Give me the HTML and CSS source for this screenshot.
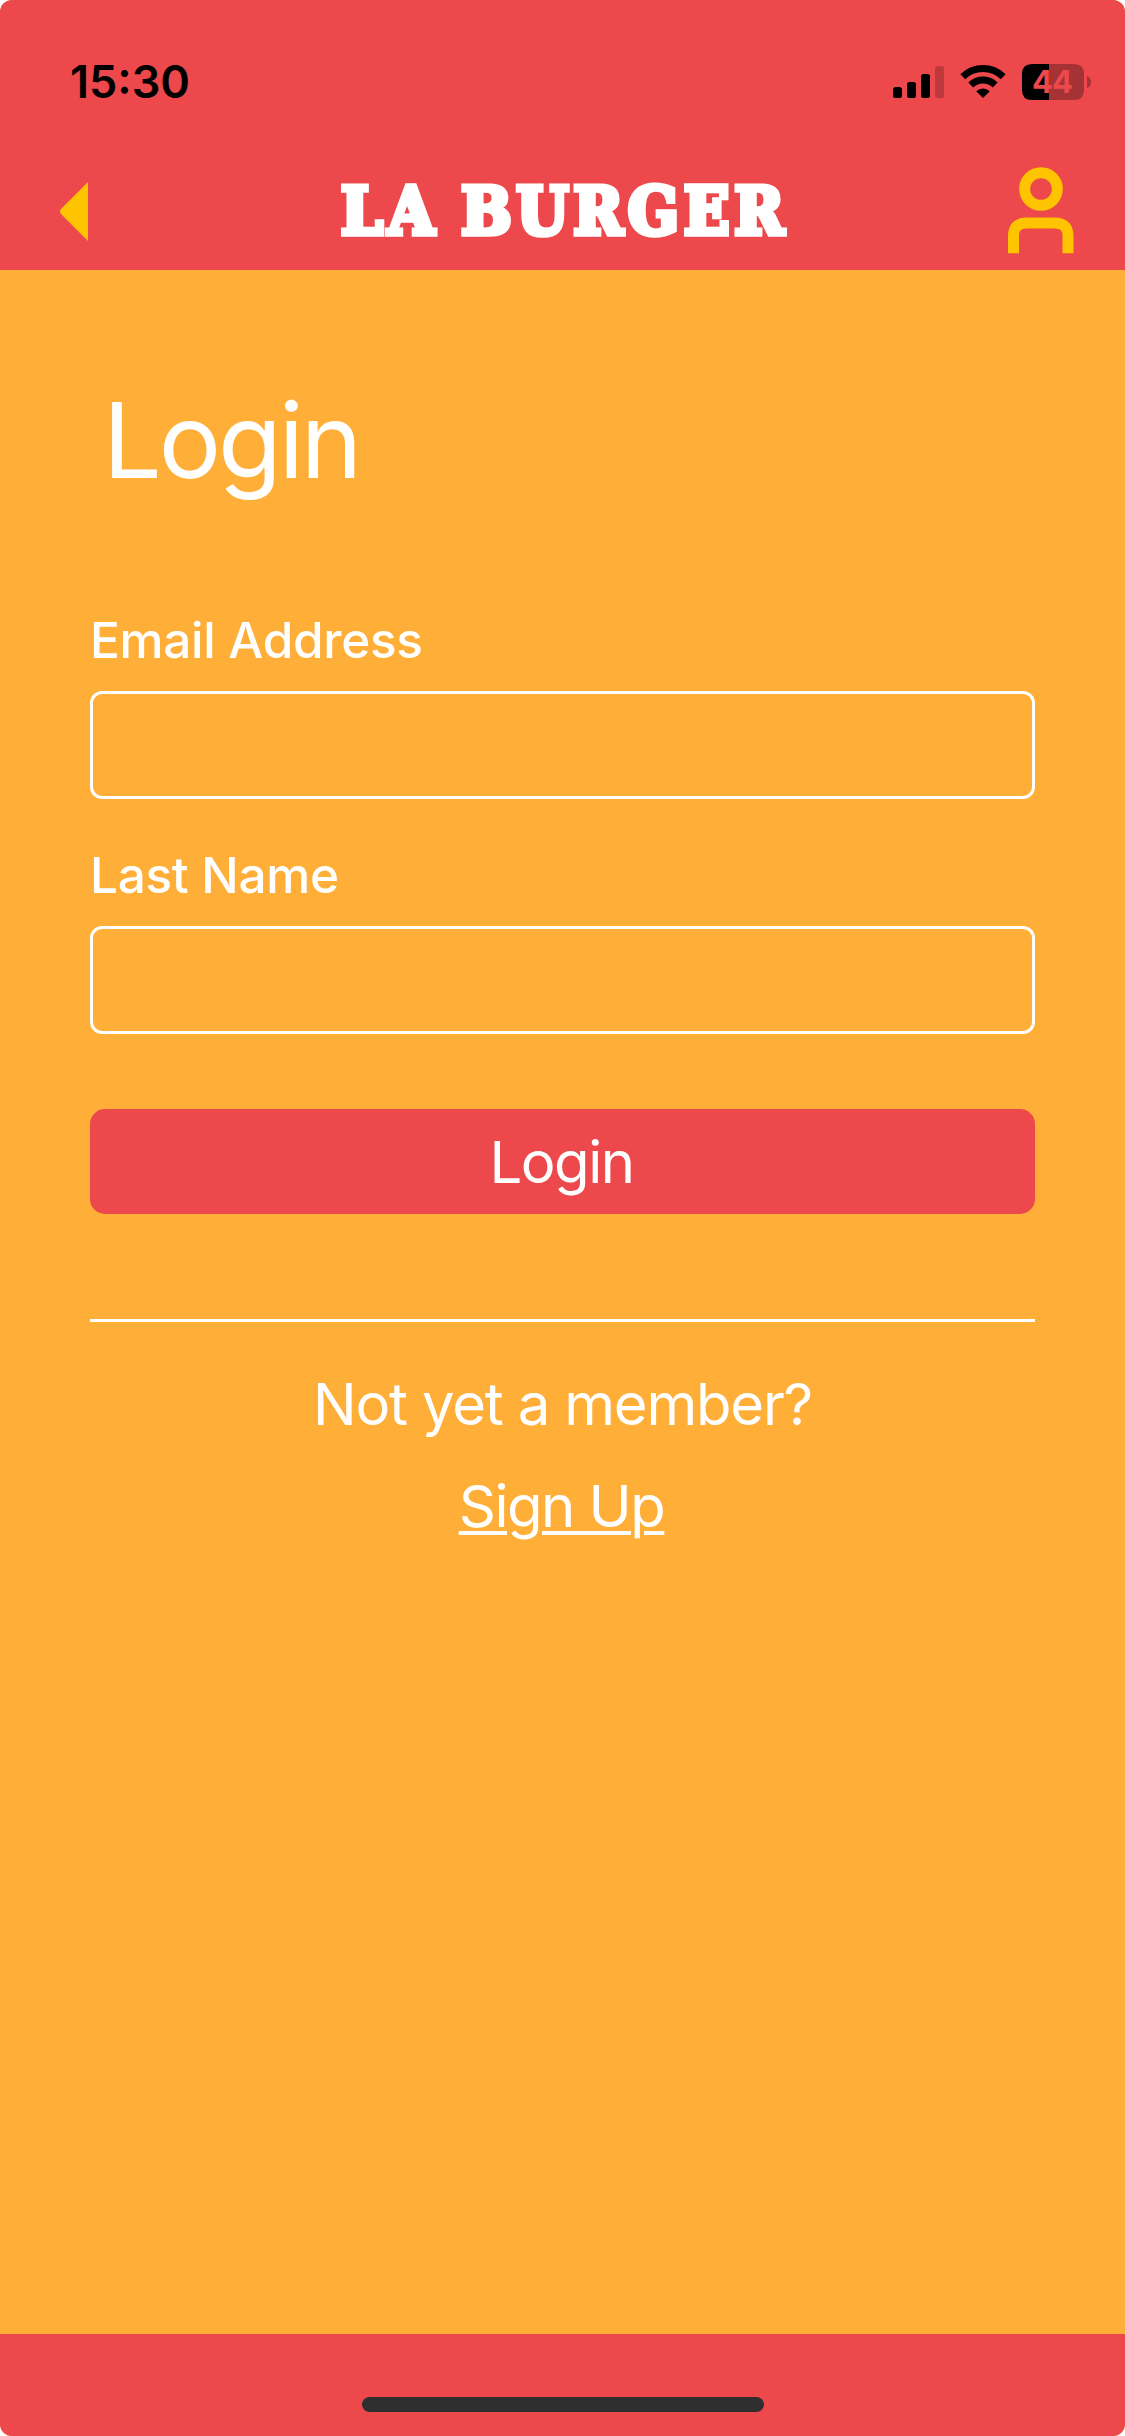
FILE: index.html
```html
<!DOCTYPE html>
<html lang="en">
<head>
<meta charset="utf-8">
<title>La Burger – Login</title>
<link rel="stylesheet" href="styles.css">
</head>
<body>
<div class="screen">
  <header class="header">
    <div class="status">
      <span class="time">15:30</span>
      <svg class="status-icons" width="200" height="38" viewBox="892 64 200 38">
        <rect x="893" y="87" width="9" height="11" rx="2.5"/>
        <rect x="907" y="82" width="9" height="16" rx="2.5"/>
        <rect x="921" y="74" width="9" height="24" rx="2.5"/>
        <rect x="935" y="66" width="9" height="32" rx="2.5" opacity=".2"/>
        <g fill="none" stroke="#000">
          <path d="M962.8 76.8 A29 29 0 0 1 1003.2 76.8" stroke-width="7"/>
          <path d="M970.8 84.9 A17.6 17.6 0 0 1 995.2 84.9" stroke-width="7"/>
        </g>
        <path d="M983 98 L976.2 91.2 A9.8 9.8 0 0 1 989.8 91.2 Z"/>
        <path d="M1049 64 H1074 Q1084 64 1084 74 V90 Q1084 100 1074 100 H1049 Z" opacity=".3"/>
        <path d="M1049 64 H1032 Q1022 64 1022 74 V90 Q1022 100 1032 100 H1049 Z"/>
        <path d="M1087 76 Q1091 77.500 1091 82 Q1091 86.500 1087 88 Z" opacity=".3"/>
        <text class="battery-level" x="1032" y="93" textLength="41">44</text>
      </svg>
    </div>
    <nav class="nav">
      <svg class="back" width="28" height="59" viewBox="0 0 28 59"><path d="M28 0 V59 L1 32 Q-1 29.500 1 27 Z"/></svg>
      <div class="brand">LA BURGER</div>
      <svg class="user" width="66" height="88" viewBox="0 0 66 88">
        <circle cx="33" cy="22" r="16.300"/>
        <path d="M5.500 86.300 V69 Q5.500 56 18.500 56 H47 Q60 56 60 69 V86.300"/>
      </svg>
    </nav>
  </header>
  <main class="main">
    <h1 class="title">Login</h1>
    <form class="form">
      <label class="label" for="email">Email Address</label>
      <input class="field" id="email">
      <label class="label" for="last">Last Name</label>
      <input class="field" id="last">
      <button class="submit" type="button">Login</button>
    </form>
    <hr class="rule">
    <p class="prompt">Not yet a member?</p>
    <p class="prompt"><a class="link">Sign Up</a></p>
  </main>
  <footer class="footer"><div class="home-bar"></div></footer>
</div>
</body>
</html>
```
FILE: styles.css
```css
* { box-sizing: border-box; }
body { margin: 0; background: #fff; font-family: Inter, "Liberation Sans", sans-serif; }
.screen { width: 1125px; height: 2436px; display: flex; flex-direction: column; border-radius: 12px; overflow: hidden; background: #ffae38; color: #fff; }
.header { height: 270px; background: #ed484b; }
.status { height: 152px; padding: 54px 33px 0 70px; display: flex; justify-content: space-between; align-items: flex-start; color: #000; }
.time { font-size: 45px; line-height: 56px; font-weight: 600; }
.status-icons { margin-top: 10px; }
.battery-level { font-size: 31px; font-weight: 700; fill: #ed484b; }
.nav { height: 118px; padding: 0 51px; display: grid; grid-template-columns: 1fr auto 1fr; align-items: center; }
.back { margin-left: 9px; fill: #ffc400; }
.brand { font: bold 66px/84px "DejaVu Serif Condensed", "DejaVu Serif", serif; font-stretch: condensed; letter-spacing: 5.2px; word-spacing: -4px; margin-right: -5px; -webkit-text-stroke: 5.500px #fff; white-space: nowrap; }
.user { justify-self: end; fill: none; stroke: #ffc400; stroke-width: 11; }
.main { flex: 1; padding: 111px 90px 0; }
.title { margin: 0; padding-left: 13px; font-size: 104px; line-height: 118px; font-weight: 400; height: 233px; letter-spacing: -3.1px; }
.form { display: flex; flex-direction: column; }
.label { font-size: 49.500px; line-height: 52px; font-weight: 500; height: 77px; letter-spacing: -.3px; }
.field { height: 108px; padding: 0 24px; border: 3px solid #fff; border-radius: 12px; background: transparent; color: #fff; font: inherit; font-size: 48px; outline: none; margin-bottom: 50px; }
.submit { height: 105px; margin-top: 25px; border: 0; border-radius: 15px; background: #ed484b; color: #fff; font: 400 58px/107px Inter, sans-serif; letter-spacing: -1.5px; padding: 0 2px 0 0; }
.rule { margin: 105px 0 44px; border: 0; height: 3px; background: #fff; }
.prompt { margin: 0; height: 102px; text-align: center; font-size: 58px; line-height: 76px; letter-spacing: -1.2px; }
.link { margin-right: 2px; letter-spacing: -1.5px; text-decoration: underline; text-decoration-thickness: 4px; text-underline-offset: 4px; }
.footer { height: 102px; padding-top: 63px; background: #ed484b; }
.home-bar { width: 402px; height: 15px; margin: 0 auto; border-radius: 8px; background: #2f2f2f; }
```
